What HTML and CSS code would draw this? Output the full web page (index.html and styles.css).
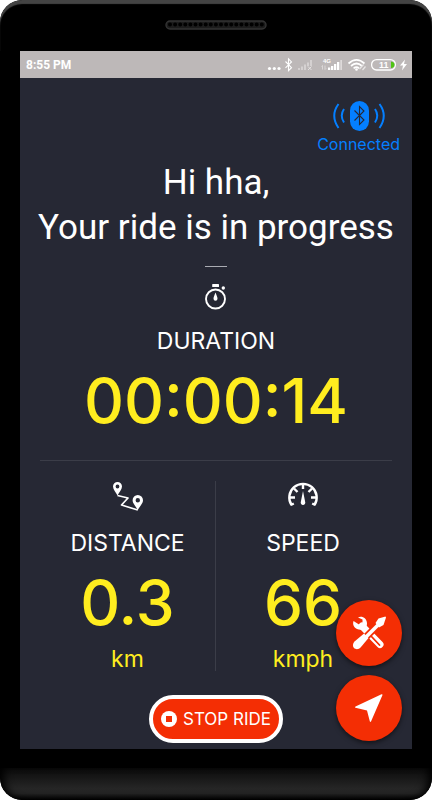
FILE: index.html
```html
<!DOCTYPE html>
<html lang="en">
<head>
<meta charset="utf-8">
<meta name="viewport" content="width=device-width, initial-scale=1">
<title>Ride in progress</title>
<link rel="stylesheet" href="styles.css">
</head>
<body>
<div class="phone">
  <div class="phone-top">
    <svg class="speaker" width="102" height="10" viewBox="0 0 102 10" aria-hidden="true">
      <rect x="1" y="1" width="100" height="8" rx="4" fill="#1c1c1c" stroke="#333" stroke-width="1.4"/>
      <path d="M5 4.500H98" stroke="#000" stroke-width="4" stroke-linecap="round" stroke-dasharray="0 5.1"/>
    </svg>
  </div>
  <div class="screen">
    <header class="status-bar">
      <span class="clock">8:55 PM</span>
      <svg class="status-icons" width="142" height="16" viewBox="0 0 142 16" aria-label="Battery 11 percent, charging">
        <g fill="#fff">
          <circle cx="2.500" cy="11.500" r="1.600"/><circle cx="7.300" cy="11.500" r="1.600"/><circle cx="12" cy="11.500" r="1.600"/>
        </g>
        <path d="M18.500 4.500l6 6.200-3 3V1.800l3 3.100-6 6" fill="none" stroke="#fff" stroke-width="1.1"/>
        <g fill="#d5d1d1">
          <path d="M31 11h2v2h-2zM34 9.500h2v3.500h-2zM37 7.500h2v5.500h-2zM40 5.500h2v3.500h-2zM43 3h2v6h-2z"/>
          <path d="M41 9.500l3.500 3.500M44.500 9.500l-3.500 3.500" stroke="#e4e1e1" stroke-width="1"/>
        </g>
        <text class="network" x="56" y="6">4G</text>
        <path d="M55.500 8.500v4M58 8.500v4M54.500 9.500l1-1M59 11.500l-1 1" stroke="#dedada" stroke-width=".9" fill="none"/>
        <path d="M61 10.500h2.300v2.500h-2.300zM64 9h2.300v4h-2.300zM67 7h2.300v6h-2.300zM70 5h2.300v8h-2.300z" fill="#fff"/>
        <path d="M73.300 3h1.700v10h-1.700z" fill="#dedada"/>
        <path d="M81.500 6.500Q89.500-.8 97.500 6.500M84 9Q89.500 4 95 9M86.600 11.300Q89.500 9 92 11.300" fill="none" stroke="#fff" stroke-width="1.700"/>
        <circle cx="89.500" cy="12.500" r="1.300" fill="#fff"/>
        <path d="M92.500 12l4-4.500M95.500 13l3-3.500" stroke="#e8e6e6" stroke-width="1.200"/>
        <rect x="104.600" y="2.600" width="23.800" height="10.400" rx="5" fill="none" stroke="#fff" stroke-width="1.300"/>
        <path d="M124 4.500q3.500 .5 3.500 3.300t-3.500 3.300z" fill="#4fc414"/>
        <text class="charge" x="112" y="11">11</text>
        <path d="M138 2.500l-5 6h3l-1 5 5-6.500h-3z" fill="#fff"/>
      </svg>
    </header>

    <main class="ride">
      <div class="connection">
        <svg width="54" height="32" viewBox="0 0 54 32" aria-hidden="true">
          <rect x="18" y="1" width="19" height="30" rx="9.500" fill="#047fff"/>
          <path d="M22.500 10.500l9.500 9.500-4.500 4.500v-18l4.500 4.500-9.500 9.500" fill="none" stroke="#262834" stroke-width="1.100"/>
          <path d="M12 9Q7.500 15.500 12 22.500M6.500 4Q-2 15.500 6.500 28M43 9Q47.500 15.500 43 22.500M47.500 4Q56 15.500 47.500 28" fill="none" stroke="#047fff" stroke-width="2"/>
        </svg>
        <span>Connected</span>
      </div>

      <h1>Hi hha,<br>Your ride is in progress</h1>
      <div class="short-rule"></div>

      <section class="metric duration">
        <svg width="24" height="28" viewBox="0 0 24 28" aria-hidden="true">
          <circle cx="11.500" cy="16" r="9.500" fill="none" stroke="#fff" stroke-width="1.900"/>
          <rect x="8.200" y="1" width="6.800" height="3" rx=".6" fill="#fff"/>
          <circle cx="19.300" cy="5" r="1.700" fill="#fff"/>
          <path d="M11.500 9.500c.9 2.500 2 4.500 2 6.200a2 2 0 0 1-4 0c0-1.700 1.100-3.700 2-6.200z" fill="#fff"/>
        </svg>
        <h2>DURATION</h2>
        <p class="value">00:00:14</p>
      </section>

      <div class="stats">
        <section class="metric">
          <svg width="32" height="32" viewBox="0 0 32 32" aria-hidden="true">
            <path d="M5.500 14.500L16 17l-6.500 7L25.800 29" fill="none" stroke="#fff" stroke-width="1.700" stroke-linejoin="round"/>
            <path fill="#fff" fill-rule="evenodd" d="M5.500 1a4.500 4.500 0 0 1 4.500 4.500c0 3-3 6-4.500 9C4 11.500 1 8.500 1 5.500A4.500 4.500 0 0 1 5.500 1zm0 2.600a1.900 1.900 0 1 0 0 3.800 1.900 1.900 0 0 0 0-3.800zM25.800 14a5.200 5.200 0 0 1 5.200 5.200c0 3.300-3.600 6.300-5.200 10-1.600-3.700-5.200-6.700-5.200-10a5.200 5.200 0 0 1 5.200-5.200zm0 3a2.200 2.200 0 1 0 0 4.400 2.200 2.200 0 0 0 0-4.400z"/>
          </svg>
          <h2>DISTANCE</h2>
          <p class="value">0.3</p>
          <p class="unit">km</p>
        </section>
        <section class="metric">
          <svg width="32" height="32" viewBox="0 0 32 32" aria-hidden="true">
            <g fill="none" stroke="#fff" stroke-width="2.400">
              <path d="M4.500 24A13.700 13.700 0 1 1 27.500 24"/>
              <path d="M3 16.500h5M24 16.500h5M7 7.500l3.500 3.500M25 7.500l-3.500 3.500M16 3v5M3.800 24l3-1.500M28.200 24l-3-1.500"/>
            </g>
            <path d="M16 10l2.200 11a2.300 2.300 0 1 1-4.400 0z" fill="#fff"/>
          </svg>
          <h2>SPEED</h2>
          <p class="value">66</p>
          <p class="unit">kmph</p>
        </section>
      </div>

      <button class="stop" type="button">
        <svg width="16" height="16" viewBox="0 0 16 16" aria-hidden="true">
          <circle cx="8" cy="8" r="8" fill="#fff"/>
          <rect x="5" y="5" width="6" height="6" fill="#f42e04"/>
        </svg>
        STOP RIDE
      </button>

      <div class="actions">
        <button class="fab" type="button" aria-label="Repair tools">
          <svg width="34" height="36" viewBox="0 0 34 36" aria-hidden="true">
            <path d="M10 11L28 29.500" stroke="#fff" stroke-width="7" stroke-linecap="round"/>
            <path d="M1.500 6l5.500 3.500 3.500-1.500V4.500L6 2.500C10 .5 15 3.500 15 8.500c0 5.500-5.500 7.500-10 5.500-3.500-1.500-4.500-5-3.500-8z" fill="#fff"/>
            <path d="M19 21l8.500 9" stroke="#f42e04" stroke-width="1.800" stroke-linecap="round"/>
            <path d="M11 25L26 10" stroke="#f42e04" stroke-width="7"/>
            <path d="M9 27L28 8" stroke="#fff" stroke-width="3.500"/>
            <path d="M23.500 8l3-4.500 7-2 .5 1-2.500 7.500-4.500 2.500z" fill="#fff"/>
            <path d="M12 18.500l4.500 4.500-7.500 9c-2.500 3-5.500 2.500-7 1s-1.500-4.500 .5-6.500z" fill="#fff"/>
          </svg>
        </button>
        <button class="fab" type="button" aria-label="Navigate">
          <svg width="34" height="36" viewBox="0 0 34 36" aria-hidden="true">
            <path d="M30.500 5L19 31.500q-.8 1-1.200-.2L15 20.500 3.500 17.800q-1.200-.5 0-1.200L29.500 4.200q1.200-.2 1 .8z" fill="#fff"/>
          </svg>
        </button>
      </div>
    </main>
  </div>
  <div class="phone-chin"></div>
</div>
</body>
</html>
```

FILE: styles.css
```css
* {
  box-sizing: border-box;
}

body {
  margin: 0;
  background: #fff;
  font-family: Inter, "Liberation Sans", sans-serif;
  color: #fff;
}

h1,
h2,
p {
  margin: 0;
  font-weight: 400;
}

svg {
  display: block;
}

.phone {
  display: flex;
  flex-direction: column;
  min-height: 100vh;
  overflow: hidden;
  border-radius: 22px;
  background: #000;
}

.phone-top {
  display: flex;
  justify-content: center;
  height: 51px;
  padding-top: 20px;
  border-radius: 22px 22px 0 0;
  box-shadow: inset 0 4px 1px #444;
}

.phone-chin {
  height: 32px;
  margin-top: 19px;
  border-radius: 0 0 22px 22px;
  background: linear-gradient(#0b0b0b, #262626 65%, #222 80%, #000);
  box-shadow: inset 8px 0 8px -4px #000, inset -8px 0 8px -4px #000;
}

.screen {
  display: flex;
  flex: 1;
  flex-direction: column;
  margin: 0 20px;
  background: #262834;
}

.status-bar {
  display: flex;
  align-items: center;
  justify-content: space-between;
  height: 27px;
  padding: 0 3px 0 6px;
  background: #bdb8b8;
}

.clock {
  font: 700 12px/16px Roboto, "Liberation Sans", sans-serif;
}

.network {
  font: 700 6px "Liberation Sans", sans-serif;
  fill: #fff;
}

.charge {
  font: 700 9px "Liberation Sans", sans-serif;
  fill: #fff;
}

.ride {
  position: relative;
  display: flex;
  flex: 1;
  flex-direction: column;
  align-items: center;
  padding: 22px 20px 6px;
}

.connection {
  display: flex;
  flex-direction: column;
  align-items: center;
  align-self: flex-end;
  margin-right: -8px;
  color: #047fff;
  font-size: 16px;
  line-height: 24px;
}

h1 {
  margin-top: 4px;
  font: 400 35px/45px Roboto, "Liberation Sans", sans-serif;
  text-align: center;
  white-space: nowrap;
}

.short-rule {
  width: 22px;
  height: 1px;
  margin-top: 16px;
  background: #aaacb3;
}

.metric {
  display: flex;
  flex-direction: column;
  align-items: center;
}

.duration {
  margin-top: 16px;
}

.metric h2 {
  margin-top: 14px;
  font-size: 23px;
  line-height: 32px;
}

.metric .value {
  color: #ffed1f;
  font-size: 62px;
  font-weight: 500;
  line-height: 88px;
}

.metric .unit {
  color: #ffed1f;
  font-size: 23px;
  line-height: 24px;
}

.stats {
  display: grid;
  grid-template-columns: 1fr 1fr;
  align-self: stretch;
  margin-top: 15px;
  padding: 20px 2px 0 0;
  border-top: 1px solid #3b3d48;
}

.stats .metric + .metric {
  border-left: 1px solid #3b3d48;
}

.stop {
  display: flex;
  align-items: center;
  gap: 6px;
  height: 48px;
  margin-top: auto;
  padding: 0 8px;
  border: 4px solid #fff;
  border-radius: 24px;
  background: #f42e04;
  color: #fff;
  font: 400 17px/24px Inter, "Liberation Sans", sans-serif;
  white-space: nowrap;
}

.actions {
  position: absolute;
  right: 10px;
  bottom: 8px;
  display: flex;
  flex-direction: column;
  gap: 9px;
}

.fab {
  display: flex;
  align-items: center;
  justify-content: center;
  width: 66px;
  height: 66px;
  padding: 0;
  border: 0;
  border-radius: 50%;
  background: #f42e04;
  box-shadow: 0 2px 5px #0008;
}
```
